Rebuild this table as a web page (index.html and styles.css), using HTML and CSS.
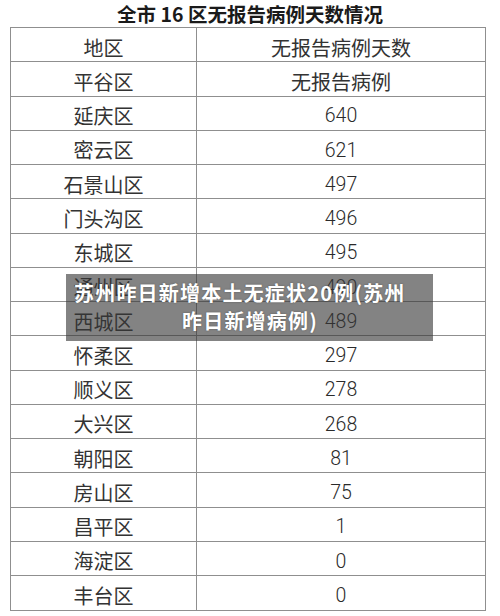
FILE: index.html
```html
<!DOCTYPE html>
<html lang="zh-CN">
<head>
<meta charset="utf-8">
<link rel="stylesheet" href="styles.css">
</head>
<body>
<div class="page">
  <h1 class="title">全市 16 区无报告病例天数情况</h1>
  <div class="table">
    <div class="cell c1">地区</div><div class="cell c2">无报告病例天数</div>
    <div class="cell c1">平谷区</div><div class="cell c2">无报告病例</div>
    <div class="cell c1">延庆区</div><div class="cell c2 num">640</div>
    <div class="cell c1">密云区</div><div class="cell c2 num">621</div>
    <div class="cell c1">石景山区</div><div class="cell c2 num">497</div>
    <div class="cell c1">门头沟区</div><div class="cell c2 num">496</div>
    <div class="cell c1">东城区</div><div class="cell c2 num">495</div>
    <div class="cell c1">通州区</div><div class="cell c2 num">490</div>
    <div class="cell c1">西城区</div><div class="cell c2 num">489</div>
    <div class="cell c1">怀柔区</div><div class="cell c2 num">297</div>
    <div class="cell c1">顺义区</div><div class="cell c2 num">278</div>
    <div class="cell c1">大兴区</div><div class="cell c2 num">268</div>
    <div class="cell c1">朝阳区</div><div class="cell c2 num">81</div>
    <div class="cell c1">房山区</div><div class="cell c2 num">75</div>
    <div class="cell c1">昌平区</div><div class="cell c2 num">1</div>
    <div class="cell c1">海淀区</div><div class="cell c2 num">0</div>
    <div class="cell c1 last">丰台区</div><div class="cell c2 num last">0</div>
  </div>
  <div class="caption">
    <div class="cap-line first">苏州昨日新增本土无症状20例(苏州</div>
    <div class="cap-line second">昨日新增病例)</div>
  </div>
</div>
</body>
</html>
```
FILE: styles.css
```css
html, body {
  margin: 0;
  padding: 0;
  background: #ffffff;
}
.page {
  position: relative;
  width: 500px;
  height: 616px;
  overflow: hidden;
  font-family: "Noto Sans CJK SC", "Noto Sans", sans-serif;
}
.title {
  margin: 0;
  height: 27px;
  font-size: 19.5px;
  font-weight: 700;
  line-height: 27px;
  text-align: center;
  color: #1a1a1a;
  letter-spacing: 0;
}
.table {
  margin-left: 10px;
  width: 476px;
  box-sizing: border-box;
  border: 1px solid #8f8f8f;
  display: grid;
  grid-template-columns: 186px 1fr;
  grid-auto-rows: 34.25px;
}
.cell {
  display: flex;
  align-items: center;
  justify-content: center;
  padding-top: 6px;
  box-sizing: border-box;
  border-bottom: 1px solid #8f8f8f;
  font-size: 20px;
  color: #333333;
  line-height: 1;
}
.cell.last {
  border-bottom: none;
}
.c1 {
  border-right: 1px solid #8f8f8f;
}
.num {
  font-family: Roboto, "Noto Sans CJK SC", sans-serif;
  font-weight: 300;
  font-size: 19.5px;
  color: #2a2a2a;
}
.caption {
  position: absolute;
  left: 66px;
  top: 274px;
  width: 367px;
  height: 67px;
  box-sizing: border-box;
  padding-top: 5px;
  background: rgba(55, 55, 55, 0.62);
  color: #ffffff;
  font-size: 20px;
  font-weight: 700;
  line-height: 28px;
  letter-spacing: 1.2px;
  text-shadow: 0 0 2px rgba(0, 0, 0, 0.35);
}
.cap-line.first {
  padding-left: 8px;
}
.cap-line.second {
  padding-left: 116px;
}
```
